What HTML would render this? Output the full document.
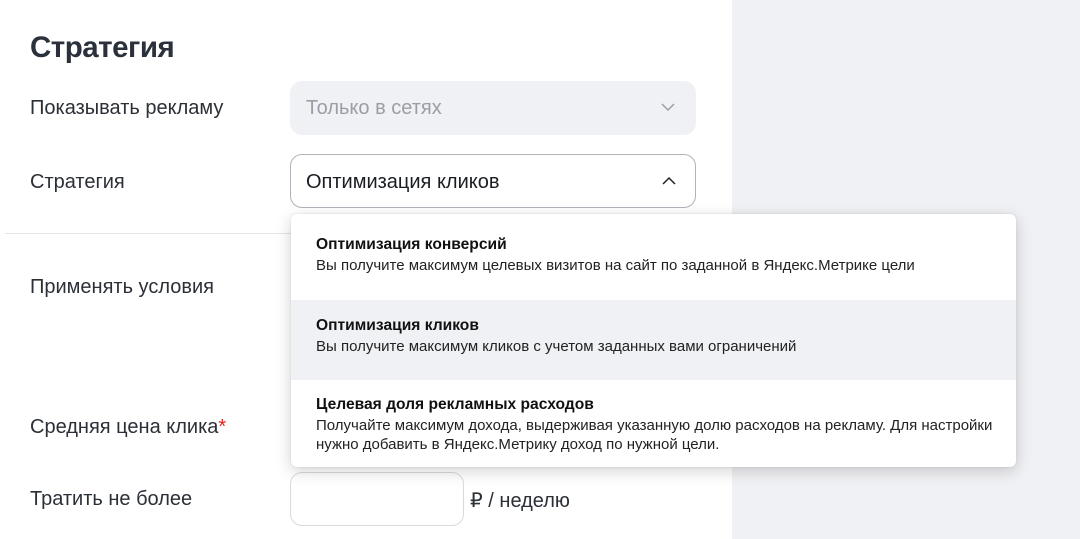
<!DOCTYPE html>
<html><head><meta charset="utf-8"><style>
*{margin:0;padding:0;box-sizing:border-box}
body{width:1080px;height:539px;overflow:hidden;background:#fff;font-family:"Liberation Sans","Noto Sans CJK SC",sans-serif;color:#21272e;position:relative}
.right{position:absolute;left:732px;top:0;width:348px;height:539px;background:#f0f1f4}
.a{position:absolute;white-space:nowrap}
.lbl{font-size:20px;color:#2b2f36}
.box{position:absolute;border-radius:12px}
.dd{position:absolute;left:291px;top:214px;width:725px;height:253px;background:#fff;border-radius:6px;box-shadow:0 4px 16px rgba(0,0,0,.18),0 0 2px rgba(0,0,0,.1);overflow:hidden}
.it{position:absolute;left:0;width:725px;padding-left:25px}
.t{font-size:15.6px;font-weight:bold;color:#111;white-space:nowrap}
.d{font-size:15px;color:#222;white-space:nowrap;line-height:19px;margin-top:2px}
</style></head><body>
<div class="right"></div>
<div class="a" style="left:30px;top:31px;font-size:29.5px;font-weight:bold;letter-spacing:-0.5px;color:#2b313b">Стратегия</div>
<div class="a lbl" style="left:30px;top:97px">Показывать рекламу</div>
<div class="box" style="left:290px;top:81px;width:406px;height:54px;background:#f0f1f4"></div>
<div class="a lbl" style="left:306px;top:97px;color:#9a9ea6">Только в сетях</div>
<svg class="a" style="left:660px;top:101px" width="16" height="12"><path d="M2 3 L8 9 L14 3" fill="none" stroke="#9a9ea6" stroke-width="1.5"/></svg>
<div class="a lbl" style="left:30px;top:171px">Стратегия</div>
<div class="box" style="left:290px;top:154px;width:406px;height:54px;border:1px solid #b0b3b9"></div>
<div class="a lbl" style="left:306px;top:171px;color:#1a1d22">Оптимизация кликов</div>
<svg class="a" style="left:661px;top:175px" width="16" height="12"><path d="M2 9 L8 3 L14 9" fill="none" stroke="#222" stroke-width="1.5"/></svg>
<div class="a" style="left:5px;top:233px;width:286px;height:1px;background:#e2e3e6"></div>
<div class="a lbl" style="left:30px;top:276px">Применять условия</div>
<div class="a lbl" style="left:30px;top:416px">Средняя цена клика<span style="color:#e52020">*</span></div>
<div class="a lbl" style="left:30px;top:488px">Тратить не более</div>
<div class="box" style="left:290px;top:472px;width:174px;height:54px;border:1px solid #d8dade"></div>
<div class="a lbl" style="left:470px;top:488px">₽ / неделю</div>
<div class="dd">
 <div class="it" style="top:0;height:86px;padding-top:22px"><div class="t">Оптимизация конверсий</div><div class="d">Вы получите максимум целевых визитов на сайт по заданной в Яндекс.Метрике цели</div></div>
 <div class="it" style="top:86px;height:80px;padding-top:17px;background:#f0f1f4"><div class="t">Оптимизация кликов</div><div class="d">Вы получите максимум кликов с учетом заданных вами ограничений</div></div>
 <div class="it" style="top:166px;height:87px;padding-top:16px"><div class="t">Целевая доля рекламных расходов</div><div class="d">Получайте максимум дохода, выдерживая указанную долю расходов на рекламу. Для настройки<br>нужно добавить в Яндекс.Метрику доход по нужной цели.</div></div>
</div>
</body></html>
